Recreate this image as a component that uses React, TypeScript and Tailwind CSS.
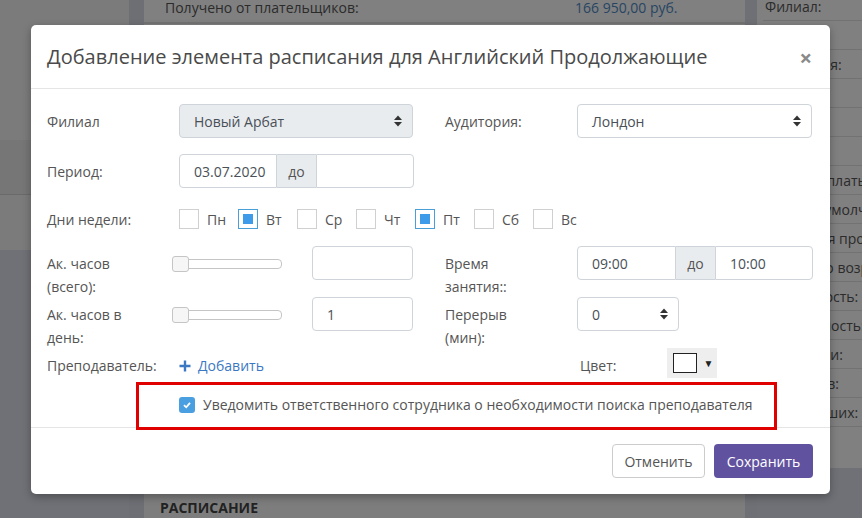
const font = { fontFamily: '"Open Sans", "Noto Sans", sans-serif' };

function SortCaret() {
  return (
    <svg width="8" height="12" viewBox="0 0 8 12" className="shrink-0">
      <path d="M0 5 L4 0.5 L8 5 Z" fill="#333" />
      <path d="M0 7 L4 11.5 L8 7 Z" fill="#333" />
    </svg>
  );
}

function Select({ value, gray, w }: { value: string; gray?: boolean; w: string }) {
  return (
    <div
      className={`flex h-[34px] items-center justify-between rounded-[4px] border border-[#ced4da] pl-[14px] pr-[10px] text-[14px] text-[#495057] ${w} ${
        gray ? "bg-[#e9ecef]" : "bg-white"
      }`}
    >
      <span>{value}</span>
      <SortCaret />
    </div>
  );
}

function RangeGroup({ a, b, wa, wb }: { a: string; b: string; wa: string; wb: string }) {
  return (
    <div className="flex h-[34px] text-[14px] text-[#495057]">
      <div className={`flex items-center rounded-l-[4px] border border-[#ced4da] pl-[14px] ${wa}`}>{a}</div>
      <div className="flex w-[39px] items-center justify-center border-y border-[#ced4da] bg-[#e9ecef] text-[#555]">
        до
      </div>
      <div className={`flex items-center rounded-r-[4px] border border-[#ced4da] pl-[14px] ${wb}`}>{b}</div>
    </div>
  );
}

function Slider() {
  return (
    <div className="relative -ml-[7px] mt-[10px] h-[16px] w-[110px]">
      <div className="absolute left-0 right-0 top-[3px] h-[10px] rounded-[4px] border border-[#c5c5c5] bg-white" />
      <div className="absolute left-0 top-0 h-[16px] w-[17px] rounded-[3px] border border-[#c5c5c5] bg-[#f6f6f6]" />
    </div>
  );
}

function Day({ label, checked }: { label: string; checked?: boolean }) {
  return (
    <div className="flex w-[59px] items-center">
      <div
        className={`flex h-[20px] w-[20px] items-center justify-center border bg-white ${
          checked ? "border-[#4a9fd8]" : "border-[#d0d0d0]"
        }`}
      >
        {checked && <div className="h-[10px] w-[10px] bg-[#3d9be9]" />}
      </div>
      <span className="ml-[8px] text-[14px] text-[#555]">{label}</span>
    </div>
  );
}

const rightRows = [
  "Филиал:",
  "",
  "Аудитория:",
  "",
  "",
  "",
  "Способ оплаты:",
  "Цена по умолчанию:",
  "Категория продукта:",
  "Группа по возрасту:",
  "Вместимость:",
  "Длительность:",
  "Аудитории:",
  "Студентов:",
  "Окончивших:",
];

export default function App() {
  return (
    <div className="relative h-[518px] w-[862px] overflow-hidden bg-[#6f7176]" style={font}>
      {/* page behind the dialog */}
      <div className="flex h-full">
        <div className="flex w-[129px] shrink-0 flex-col">
          <div className="h-[140px] bg-[#7b7b7b]" />
          <div className="h-[55px] border-b border-[#6a6a6a] bg-[#767676]" />
          <div className="h-[55px] bg-[#7b7b7b]" />
        </div>
        <div className="w-[15px] shrink-0 bg-[#6e6f74]" />
        <div className="flex w-[601px] shrink-0 flex-col">
          <div className="flex h-[24px] items-start whitespace-nowrap border-b-2 border-[#737373] bg-[#808080] px-[21px] text-[14px] leading-[15px] text-[#2b2b2b]">
            <span className="w-[410px]">Получено от плательщиков:</span>
            <span className="text-[#274563]">166 950,00 руб.</span>
          </div>
          <div className="h-[470px] bg-[#808080]" />
          <div className="border-t-2 border-[#6a6a6a] bg-[#7d7d7d] px-[16px] pt-[3px] text-[14px] font-bold text-[#222]">
            РАСПИСАНИЕ
          </div>
        </div>
        <div className="w-[12px] shrink-0 bg-[#6f7075]" />
        <div className="flex h-[468px] min-w-0 flex-1 flex-col overflow-hidden bg-[#808080] pl-[6px] text-[14px] text-[#2b2b2b]">
          {rightRows.map((r, i) => (
            <div
              key={i}
              className={`flex items-center whitespace-nowrap border-b border-[#727272] pl-[2px] ${
                i === 0 ? "h-[21px] items-start leading-[14px]" : "h-[29px]"
              }`}
            >
              {r}
            </div>
          ))}
        </div>
      </div>

      {/* dialog */}
      <div className="absolute left-[31px] top-[25px] flex h-[469px] w-[799px] flex-col rounded-[5px] bg-white shadow-[0_3px_9px_rgba(0,0,0,0.3)]">
        <div className="flex h-[64px] items-center justify-between border-b border-[#e5e5e5] pl-[16px] pr-[18px]">
          <h4 className="text-[20px] text-[#4a4a4a]">Добавление элемента расписания для Английский Продолжающие</h4>
          <span className="text-[22px] font-bold leading-none text-[#8a8a8a]">×</span>
        </div>

        <div className="flex flex-1 flex-col px-[16px] text-[14px] text-[#555]">
          <div className="mt-[15px] flex h-[34px] items-center">
            <div className="w-[132px]">Филиал</div>
            <Select value="Новый Арбат" gray w="w-[234px]" />
            <div className="ml-[32px] w-[132px]">Аудитория:</div>
            <Select value="Лондон" w="w-[235px]" />
          </div>

          <div className="mt-[16px] flex h-[34px] items-center">
            <div className="w-[132px]">Период:</div>
            <RangeGroup a="03.07.2020" b="" wa="w-[98px]" wb="w-[98px]" />
          </div>

          <div className="mt-[14px] flex h-[34px] items-center">
            <div className="w-[132px]">Дни недели:</div>
            <Day label="Пн" />
            <Day label="Вт" checked />
            <Day label="Ср" />
            <Day label="Чт" />
            <Day label="Пт" checked />
            <Day label="Сб" />
            <Day label="Вс" />
          </div>

          <div className="mt-[10px] flex h-[34px] items-start">
            <div className="w-[132px] pt-[6px] leading-[23px]">
              Ак. часов
              <br />
              (всего):
            </div>
            <Slider />
            <div className="ml-[30px] h-[34px] w-[101px] rounded-[4px] border border-[#ced4da]" />
            <div className="ml-[32px] w-[132px] pt-[6px] leading-[23px]">
              Время
              <br />
              занятия::
            </div>
            <RangeGroup a="09:00" b="10:00" wa="w-[99px]" wb="w-[98px]" />
          </div>

          <div className="mt-[17px] flex h-[34px] items-start">
            <div className="w-[132px] pt-[6px] leading-[23px]">
              Ак. часов в
              <br />
              день:
            </div>
            <Slider />
            <div className="ml-[30px] flex h-[34px] w-[101px] items-center rounded-[4px] border border-[#ced4da] pl-[14px] text-[#495057]">
              1
            </div>
            <div className="ml-[32px] w-[132px] pt-[6px] leading-[23px]">
              Перерыв
              <br />
              (мин):
            </div>
            <Select value="0" w="w-[102px]" />
          </div>

          <div className="mt-[17px] flex h-[30px] items-center">
            <div className="w-[132px] pt-[5px]">Преподаватель:</div>
            <div className="flex items-center pt-[5px] text-[#3b78c2]">
              <svg width="12" height="12" viewBox="0 0 12 12">
                <path d="M6 0.5 V11.5 M0.5 6 H11.5" stroke="#3b78c2" strokeWidth="2.4" />
              </svg>
              <span className="ml-[7px]">Добавить</span>
            </div>
            <div className="ml-[316px] pt-[5px]">Цвет:</div>
            <div className="ml-[51px] flex h-[30px] w-[50px] items-center bg-[#eeeeee] pl-[6px]">
              <div className="h-[20px] w-[24px] border border-[#222] bg-white" />
              <span className="ml-[6px] text-[10px] text-[#222]">▼</span>
            </div>
          </div>

          <div className="mt-[16px] flex items-center pl-[132px]">
            <div className="flex h-[16px] w-[16px] items-center justify-center rounded-[3px] bg-[#4a9fe0]">
              <svg width="10" height="10" viewBox="0 0 10 10">
                <path d="M2 5.2 L4.2 7.3 L8 2.8" fill="none" stroke="white" strokeWidth="1.8" />
              </svg>
            </div>
            <span className="ml-[8px]">Уведомить ответственного сотрудника о необходимости поиска преподавателя</span>
          </div>
        </div>

        <div className="flex h-[67px] items-center justify-end gap-[9px] border-t border-[#e5e5e5] pr-[17px] text-[14px]">
          <button className="h-[34px] w-[93px] rounded-[4px] border border-[#cccccc] bg-white text-[#555]">Отменить</button>
          <button className="h-[34px] w-[99px] rounded-[4px] bg-[#61529f] text-white">Сохранить</button>
        </div>
      </div>

      {/* red annotation frame */}
      <div className="absolute left-[136px] top-[382px] h-[48px] w-[641px] border-[3px] border-[#e00000]" />
    </div>
  );
}
